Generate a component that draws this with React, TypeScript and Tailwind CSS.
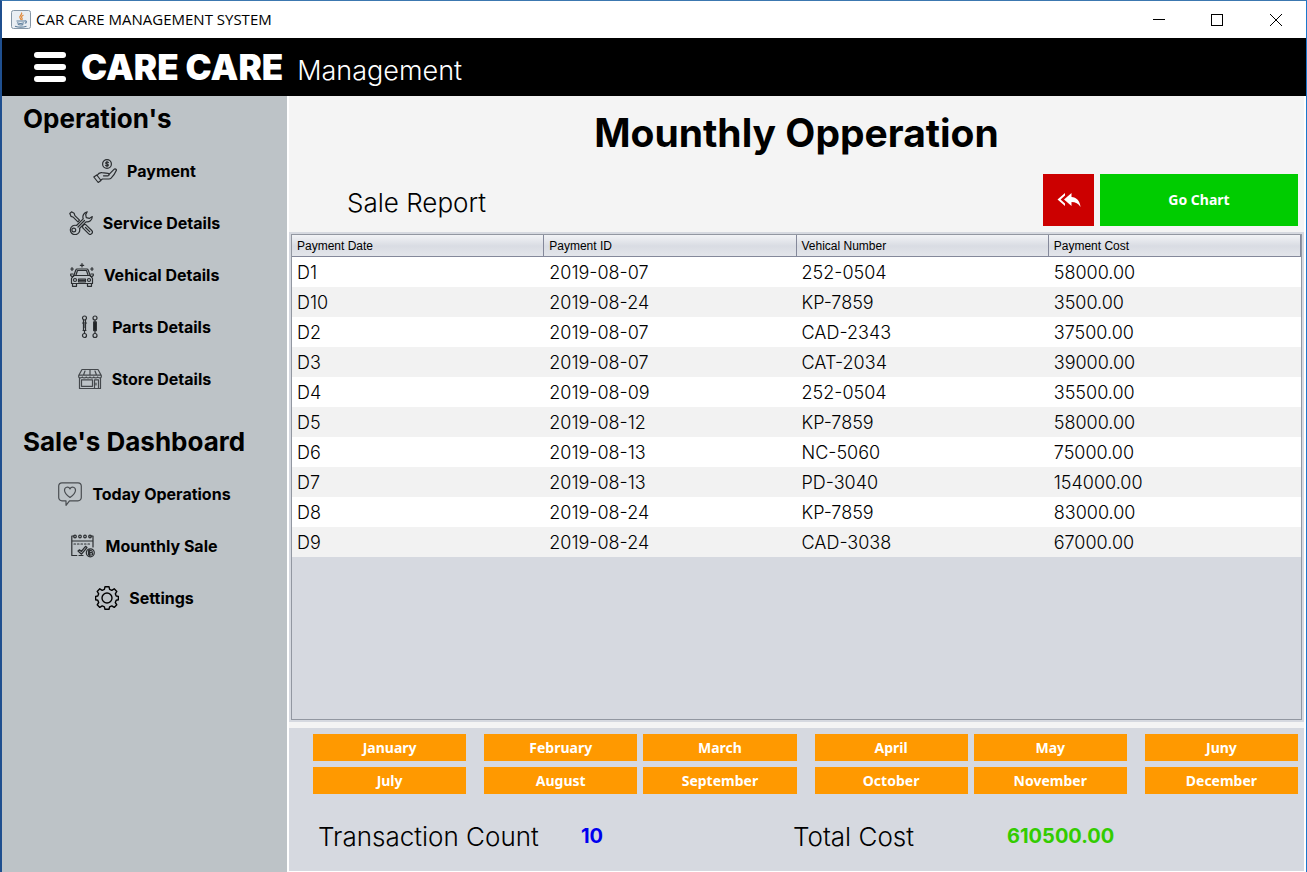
import type { ReactNode } from 'react';

const rows = [
  ['D1', '2019-08-07', '252-0504', '58000.00'],
  ['D10', '2019-08-24', 'KP-7859', '3500.00'],
  ['D2', '2019-08-07', 'CAD-2343', '37500.00'],
  ['D3', '2019-08-07', 'CAT-2034', '39000.00'],
  ['D4', '2019-08-09', '252-0504', '35500.00'],
  ['D5', '2019-08-12', 'KP-7859', '58000.00'],
  ['D6', '2019-08-13', 'NC-5060', '75000.00'],
  ['D7', '2019-08-13', 'PD-3040', '154000.00'],
  ['D8', '2019-08-24', 'KP-7859', '83000.00'],
  ['D9', '2019-08-24', 'CAD-3038', '67000.00'],
];

const columns = ['Payment Date', 'Payment ID', 'Vehical Number', 'Payment Cost'];

const monthRows = [
  ['January', 'February', 'March', 'April', 'May', 'Juny'],
  ['July', 'August', 'September', 'October', 'November', 'December'],
];

const monthMargins = ['', 'ml-[18px]', 'ml-1.5', 'ml-[18px]', 'ml-1.5', 'ml-[18px]'];

function Icon({ children, color = '#2b2e31' }: { children: ReactNode; color?: string }) {
  return (
    <svg
      aria-hidden="true"
      className="size-6 shrink-0"
      viewBox="0 0 24 24"
      fill="none"
      stroke={color}
      strokeWidth="1.2"
      strokeLinecap="round"
      strokeLinejoin="round"
    >
      {children}
    </svg>
  );
}

const PaymentIcon = () => (
  <Icon>
    <circle cx="14" cy="5" r="4.4" />
    <path d="M15.4 3.600c-.3-.6-2.700-.8-2.700.4 0 1.300 2.700.7 2.700 2s-2.500 1.200-2.800.3M14 2.300v5.400" />
    <path d="M.8 18l3-2 4.200 5.500-2.800 2zM4 16.500c1.500-2.400 3-3.200 5-2.800l6 .6c1.600.2 1.600 2.400 0 2.500H10.500M15.800 15.600l5.200-5.200c1-.9 2.800-.2 2.300 1.200-1.300 3-3 5.500-5.200 7.500-.6.600-1.300.9-2.100.9H9.500l-2 1.200" />
  </Icon>
);

const ServiceIcon = () => (
  <Icon>
    <path d="M18.200.8a5.300 5.300 0 0 0-4 7L7.500 14.500a4.700 4.700 0 1 0 3 3l6.500-6.700a5.300 5.300 0 0 0 6.300-5.200l-3 1.800-3-.8-.6-3zM9 16l6.500-6.500" />
    <circle cx="4.800" cy="19" r="1.900" />
    <path d="M.8 2.500 2.500.8l2.600 1.400.8 2.400 4.600 4.600-1.600 1.600-4.500-4.500-2.300-.9zM14 14.500l1.600-1.200 1.400.5 5.700 5.700a2.200 2.200 0 0 1-3.200 3.200L14 17.200l-.5-1.500zM16.500 16.500l4.200 4.200" />
  </Icon>
);

const VehicleIcon = () => (
  <Icon>
    <path d="M12 .6v3.400M10.300 2.300h3.400M2 4.500v3M.8 6h2.600M22 4.500v3M20.600 6h2.600" />
    <path d="M3.500 13.500 5.800 7c.2-.7.600-1 1.300-1h9.800c.7 0 1.100.3 1.300 1l2.300 6.500M6 12l1.500-4.500h9L18 12M3 11H.7v1.500L2.500 14M21 11h2.300v1.500L21.500 14" />
    <path d="M3.500 12.500h17l2 3v5h-21v-5zM2.500 20.500v2.800h4v-2.800M17.500 20.500v2.800h4v-2.800M8.500 16.200h7v2.600h-7zM8.500 17.500h7" />
    <circle cx="5" cy="17" r="1.500" />
    <circle cx="19" cy="17" r="1.500" />
  </Icon>
);

const PartsIcon = () => (
  <Icon>
    <circle cx="6.500" cy="3" r="2" />
    <circle cx="6.500" cy="20.500" r="2" />
    <circle cx="17" cy="3" r="2" />
    <circle cx="17" cy="20.500" r="2" />
    <path d="M5.500 5v3h2V5M4.500 8h4M5.500 8v7M7.500 8v7M5 15.500h3M5.500 10h2M5.500 12h2M6.500 16v2.500M17 5v2M17 16v2.500" />
    <path d="M15.800 7h2.400v8.500h-2.400z" fill="#17191b" strokeWidth="1.500" />
  </Icon>
);

const StoreIcon = () => (
  <Icon color="#44484c">
    <path d="M4 2.500h16l3.300 6v1.500c0 1-2.900 1.200-3.600 0-.7 1.200-3.200 1.200-3.900 0-.7 1.200-3.100 1.200-3.800 0-.7 1.200-3.100 1.200-3.800 0-.7 1.200-3.200 1.200-3.900 0-.7 1.200-3.600 1-3.600 0V8.500zM.8 8.200h22.400M7 4l-1.500 4M12 3v5M17 4l1.500 4" />
    <path d="M1.500 11v10.500h21V11M3.500 12.800h11v6.500h-11zM16.500 21.500v-8.700h4v8.700M18 16v2" />
  </Icon>
);

const HeartChatIcon = () => (
  <Icon color="#4a4e52">
    <path d="M4 .8h16A3.300 3.300 0 0 1 23.300 4v11.500A3.300 3.300 0 0 1 20 18.800h-8.500L8 23.300v-4.500H4A3.300 3.300 0 0 1 .7 15.500V4A3.300 3.300 0 0 1 4 .8z" />
    <path d="M12 15.500C9 13.400 6.500 11.200 6.500 8.300c0-3.300 4-4.300 5.500-1.400 1.500-2.900 5.500-1.900 5.500 1.400 0 2.900-2.500 5.100-5.500 7.200z" />
  </Icon>
);

const CalendarIcon = () => (
  <Icon>
    <path d="M3 2H.8v19.500h5M19 2h3v11M.8 7H22M8 21.500h4" />
    <circle cx="4" cy="2.500" r="1.300" />
    <circle cx="9" cy="2.500" r="1.300" />
    <circle cx="14" cy="2.500" r="1.300" />
    <circle cx="19" cy="2.500" r="1.300" />
    <path d="M3 10h17" strokeDasharray="1.500 2" />
    <path d="m7 17 1.500-1.200 1.800 1.700 4.200-5.200 1.500 1.200-5.500 6.700z" />
    <circle cx="19.300" cy="18.800" r="4" />
    <path d="M17.500 16.500h2.600c1.500 0 1.500 2.200 0 2.200h-2.600zM17.500 18.700h3c1.600 0 1.600 2.300 0 2.300h-3zM18.700 15.500v6.500" />
  </Icon>
);

const SettingsIcon = () => (
  <svg
    aria-hidden="true"
    className="size-6 shrink-0"
    viewBox="0 0 24 24"
    fill="none"
    stroke="#000"
    strokeWidth="1.400"
    strokeLinejoin="round"
  >
    <path d="M10 .7h4l.6 2.700 2.200.9L19.200 2.800 21.800 5.400l-1.500 2.400.9 2.200 2.200.4v3.400l-2.200.5-.9 2.200 1.500 2.300-2.600 2.600-2.400-1.500-2.200.9-.6 2.500h-4l-.6-2.500-2.200-.9-2.400 1.500-2.600-2.600 1.500-2.300-.9-2.200-2.200-.5v-3.400l2.200-.4.9-2.200-1.500-2.400 2.600-2.600 2.400 1.500 2.200-.9z" />
    <circle cx="12" cy="12" r="5" />
  </svg>
);

function NavItem({ icon, label }: { icon: ReactNode; label: string }) {
  return (
    <li>
      <button type="button" className="flex h-13 w-full items-center justify-center gap-2.5 text-base font-bold text-black">
        {icon}
        {label}
      </button>
    </li>
  );
}

function JavaIcon() {
  return (
    <svg aria-hidden="true" className="size-5" viewBox="0 0 20 20" fill="none">
      <rect x=".5" y=".5" width="19" height="18" rx="2" fill="#e9eef3" stroke="#8596a6" />
      <path d="M10.500 2.500c1.500 2-3 3.500-1.500 5.500.6.8 1 1.200.8 2M12.500 5c-2 1-2.500 2-1.500 3.200.5.700.2 1.300-.3 1.800" stroke="#e08a3c" strokeWidth="1.200" />
      <path d="M5.500 11h8M6 12.800c2 .8 5 .8 7 0M6.800 14.500c2 .6 4 .6 5.500 0M4 16.200c3 1 8.500 1 11.500 0M13.500 11c2.500-.6 2.500 2 .3 2.300" stroke="#5f7f9c" strokeWidth="1.100" />
    </svg>
  );
}

export default function App() {
  return (
    <div className="flex min-h-screen flex-col border-t border-r border-l-2 border-t-[#3c78b0] border-r-[#1a78cc] border-l-[#1f4f8f] bg-white font-['Inter',sans-serif] text-black">
      <div className="flex h-[37px] items-center justify-between pl-[9px]">
        <div className="flex items-center gap-[5px] font-['Open_Sans',sans-serif] text-[15px]">
          <JavaIcon />
          <span>CAR CARE MANAGEMENT SYSTEM</span>
        </div>
        <div className="flex h-full">
          <button type="button" aria-label="Minimize" className="flex w-[58px] items-center justify-center">
            <svg className="size-3" viewBox="0 0 12 12" stroke="#000" shapeRendering="crispEdges"><path d="M0 5.500h12" /></svg>
          </button>
          <button type="button" aria-label="Maximize" className="flex w-[58px] items-center justify-center">
            <svg className="size-3" viewBox="0 0 12 12" stroke="#000" fill="none" shapeRendering="crispEdges"><path d="M.5.5h11v11H.5z" /></svg>
          </button>
          <button type="button" aria-label="Close" className="flex w-[60px] items-center justify-center">
            <svg className="size-3" viewBox="0 0 12 12" stroke="#000"><path d="m0 0 12 12M12 0 0 12" /></svg>
          </button>
        </div>
      </div>

      <header className="flex h-[58px] items-center bg-black pl-8 text-white">
        <button type="button" aria-label="Menu" className="flex w-8 flex-col gap-1.5">
          <span className="h-1.5 rounded-full bg-white" />
          <span className="h-1.5 rounded-full bg-white" />
          <span className="h-1.5 rounded-full bg-white" />
        </button>
        <div className="flex items-baseline gap-3.5 pl-[15px]">
          <span className="text-[35px] font-black">CARE CARE</span>
          <span className="text-[27px] font-light">Management</span>
        </div>
      </header>

      <div className="flex flex-1">
        <aside className="w-[285px] shrink-0 bg-[#bdc3c7]">
          <h2 className="flex h-[49px] items-center pb-1 pl-[21px] text-[26px] font-bold">Operation's</h2>
          <ul>
            <NavItem icon={<PaymentIcon />} label="Payment" />
            <NavItem icon={<ServiceIcon />} label="Service Details" />
            <NavItem icon={<VehicleIcon />} label="Vehical Details" />
            <NavItem icon={<PartsIcon />} label="Parts Details" />
            <NavItem icon={<StoreIcon />} label="Store Details" />
          </ul>
          <h2 className="mt-[14px] flex h-[49px] items-center pb-1 pl-[21px] text-[26px] font-bold">Sale's Dashboard</h2>
          <ul>
            <NavItem icon={<HeartChatIcon />} label="Today Operations" />
            <NavItem icon={<CalendarIcon />} label="Mounthly Sale" />
            <NavItem icon={<SettingsIcon />} label="Settings" />
          </ul>
        </aside>

        <main className="flex min-w-0 flex-1 flex-col border-x-2 border-b border-white bg-[#f4f4f4]">
          <h1 className="flex h-[78px] items-center justify-center pb-1 text-[39px] font-bold">Mounthly Opperation</h1>
          <div className="flex h-[58px] items-start gap-1.5 pr-1.5 pl-[58px]">
            <h2 className="flex h-13 flex-1 items-center pt-1 text-[26px] font-light">Sale Report</h2>
            <button type="button" aria-label="Back" className="flex h-13 w-[51px] items-center justify-center bg-[#cc0000]">
              <svg className="h-4 w-6" viewBox="0 0 24 16" fill="#fff">
                <path d="M14.500 1v4c5 .3 8.500 4 9 10-2-3.400-5-5-9-5v4L7 7.500z" />
                <path d="M8 1v2.500L3.600 7.500 8 11.500V14L.5 7.500z" />
              </svg>
            </button>
            <button type="button" className="h-13 w-[198px] bg-[#00cc00] font-['Noto_Sans',sans-serif] text-sm font-bold text-white">
              Go Chart
            </button>
          </div>

          <section className="flex flex-1 flex-col bg-[#d6d9e0] p-0.5">
            <div className="flex-1 border border-[#9297a1]">
              <table className="w-full table-fixed border-separate border-spacing-0 text-left">
                <thead className="font-['Liberation_Sans',sans-serif] text-xs">
                  <tr className="bg-linear-to-b from-[#f2f3f6] via-[#d9dce3] to-[#e4e6eb]">
                    {columns.map((name) => (
                      <th key={name} scope="col" className="h-[22px] border-r border-b border-[#84889a] px-[5px] py-0 font-normal">
                        {name}
                      </th>
                    ))}
                  </tr>
                </thead>
                <tbody className="text-lg font-light">
                  {rows.map((row) => (
                    <tr key={row[0]} className="odd:bg-white even:bg-[#f2f2f2]">
                      {row.map((cell, i) => (
                        <td key={columns[i]} className="h-[30px] px-[5px] pt-0.5 pb-0">
                          {cell}
                        </td>
                      ))}
                    </tr>
                  ))}
                </tbody>
              </table>
            </div>
          </section>

          <footer className="mt-1.5 h-[143px] bg-[#d6d9e0] pt-1.5 pr-1.5 pl-6">
            <div className="flex flex-col gap-1.5">
              {monthRows.map((months) => (
                <div key={months[0]} className="flex">
                  {months.map((month, i) => (
                    <button
                      key={month}
                      type="button"
                      className={`h-[27px] flex-1 bg-[#ff9900] font-['Noto_Sans',sans-serif] text-sm font-bold text-white ${monthMargins[i]}`}
                    >
                      {month}
                    </button>
                  ))}
                </div>
              ))}
            </div>
            <dl className="flex h-[84px] items-center pl-[5px] text-[26px] font-light">
              <dt className="w-[263px]">Transaction Count</dt>
              <dd className="w-[212px] text-xl font-bold text-[#0000ee]">10</dd>
              <dt className="w-[214px]">Total Cost</dt>
              <dd className="text-xl font-bold text-[#33cc00]">610500.00</dd>
            </dl>
          </footer>
        </main>
      </div>
    </div>
  );
}
